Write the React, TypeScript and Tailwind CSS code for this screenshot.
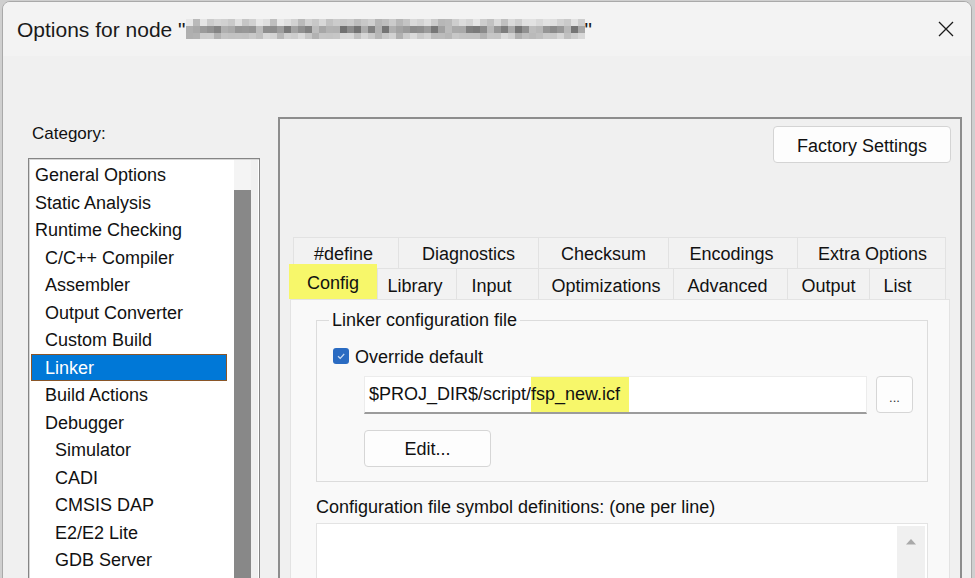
import React from "react";

const cats: { t: string; l: number; sel?: boolean }[] = [
  { t: "General Options", l: 0 },
  { t: "Static Analysis", l: 0 },
  { t: "Runtime Checking", l: 0 },
  { t: "C/C++ Compiler", l: 1 },
  { t: "Assembler", l: 1 },
  { t: "Output Converter", l: 1 },
  { t: "Custom Build", l: 1 },
  { t: "Linker", l: 1, sel: true },
  { t: "Build Actions", l: 1 },
  { t: "Debugger", l: 1 },
  { t: "Simulator", l: 2 },
  { t: "CADI", l: 2 },
  { t: "CMSIS DAP", l: 2 },
  { t: "E2/E2 Lite", l: 2 },
  { t: "GDB Server", l: 2 },
];
const levelPad = ["pl-[3px]", "pl-[13px]", "pl-[23px]"];

const topTabs = [
  { t: "#define", w: "w-[105px] pr-[5px]" },
  { t: "Diagnostics", w: "w-[140px]" },
  { t: "Checksum", w: "w-[130px]" },
  { t: "Encodings", w: "w-[129px] pr-[3px]" },
  { t: "Extra Options", w: "w-[149px] border-r pl-[2px]" },
];
const bottomTabs = [
  { t: "Library", w: "w-[79px] pr-[4px]" },
  { t: "Input", w: "w-[82px] pr-[12px]" },
  { t: "Optimizations", w: "w-[135px]" },
  { t: "Advanced", w: "w-[114px] pr-[6px]" },
  { t: "Output", w: "w-[82px]" },
  { t: "List", w: "w-[77px] border-r pr-[20px]" },
];

function BlurredName() {
  const rows = [0, 1, 2];
  const cols = Array.from({ length: 57 }, (_, i) => i);
  return (
    <div className="flex flex-col w-[399px]">
      {rows.map((r) => (
        <div key={r} className={r === 2 ? "flex h-[6px]" : "flex h-[7px]"}>
          {cols.map((c) => {
            const n = Math.abs(Math.sin(c * 12.9898 + r * 78.233) * 43758.5453) % 1;
            const base = r === 0 ? 232 - n * 50 : r === 1 ? 190 - n * 80 : 220 - n * 45;
            const g = Math.round(base);
            return (
              <div
                key={c}
                className="w-[7px] h-full"
                style={{ backgroundColor: `rgb(${g},${g},${g})` }}
              />
            );
          })}
        </div>
      ))}
    </div>
  );
}

export default function App() {
  return (
    <div className="w-[975px] h-[578px] overflow-hidden bg-[#cfcfcf] pl-[2px] pt-[1px] font-['Liberation_Sans',Arial,sans-serif] text-[#111]">
      <div className="w-[970px] h-[620px] rounded-t-[8px] border border-[#a9a9a9] bg-[#f0f0f0] flex flex-col overflow-hidden">
        {/* Title bar */}
        <div className="h-[54px] shrink-0 bg-[#f3f3f3] flex items-center pl-[14px] pr-[17px]">
          <span className="text-[21px] leading-[26px] text-[#1a1a1a] whitespace-pre pt-[1px]">Options for node "</span>
          <BlurredName />
          <span className="text-[21px] leading-[26px] text-[#1a1a1a] pt-[1px]">"</span>
          <div className="flex-1" />
          <svg width="16" height="16" viewBox="0 0 16 16">
            <path d="M1 1L15 15M15 1L1 15" stroke="#1a1a1a" strokeWidth="1.3" />
          </svg>
        </div>

        {/* Body */}
        <div className="flex pl-[25px] gap-[18px]">
          {/* Left column */}
          <div className="w-[232px] shrink-0 flex flex-col">
            <div className="mt-[67px] h-[20px] leading-[20px] text-[17px] pl-[4px] pt-[1px]">Category:</div>
            <div className="mt-[15px] h-[440px] border border-[#858585] shadow-[inset_1px_1px_0_#d6d6d6] bg-white flex pt-[1px] pl-[1px] pr-[1px]">
              <div className="w-[198px] flex flex-col pt-[1px]">
                {cats.map((c) => (
                  <div
                    key={c.t}
                    className={
                      "ml-[1px] w-[196px] h-[27.5px] flex items-center border text-[18px] pt-[2px] " +
                      levelPad[c.l] +
                      (c.sel
                        ? " bg-[#0078d7] border-[#8a5628] text-white"
                        : " border-transparent text-[#111]")
                    }
                  >
                    {c.t}
                  </div>
                ))}
              </div>
              <div className="w-[30px] flex">
                <div className="w-[6px] bg-white" />
                <div className="w-[17px] flex flex-col bg-[#f4f4f4]">
                  <div className="h-[30px]" />
                  <div className="flex-1 bg-[#888888]" />
                </div>
                <div className="w-[7px] bg-[#f0f0f0]" />
              </div>
            </div>
          </div>

          {/* Right frame */}
          <div className="mt-[61px] w-[684px] h-[500px] border-2 border-[#8d8d8d] flex flex-col">
            <div className="flex justify-end pr-[9px] pt-[7px]">
              <div className="w-[178px] h-[37px] bg-[#fdfdfd] border border-[#d4d4d4] rounded-[4px] flex items-center justify-center text-[18px] pt-[3px]">
                Factory Settings
              </div>
            </div>

            {/* Tabs */}
            <div className="mt-[74px] ml-[13px] w-[653px] flex flex-col">
              <div className="flex h-[31px]">
                {topTabs.map((t) => (
                  <div
                    key={t.t}
                    className={
                      "h-[31px] flex items-center justify-center border-l border-t border-[#e2e2e2] bg-[#f2f2f2] text-[18px] pt-[3px] " +
                      t.w
                    }
                  >
                    {t.t}
                  </div>
                ))}
              </div>
              <div className="flex h-[31px] items-start">
                <div className="relative z-10 -ml-[4px] -mt-[4px] w-[88px] h-[35px] bg-[#f7f76a] flex items-center justify-center text-[18px] pt-[3px]">
                  Config
                </div>
                {bottomTabs.map((t) => (
                  <div
                    key={t.t}
                    className={
                      "h-[31px] flex items-center justify-center border-l border-t border-[#e2e2e2] bg-[#f2f2f2] text-[18px] pt-[4px] " +
                      t.w
                    }
                  >
                    {t.t}
                  </div>
                ))}
              </div>
            </div>

            {/* Panel */}
            <div className="ml-[10px] w-[660px] h-[400px] bg-[#f9f9f9] border border-[#e3e3e3] pl-[25px] flex flex-col">
              <fieldset className="mt-[9px] w-[612px] h-[173px] border border-[#dcdcdc]">
                <legend className="ml-[12px] px-[3px] text-[18px] leading-[21px] pt-[1px]">Linker configuration file</legend>
                <div className="mt-[15px] pl-[16px] h-[20px] flex items-center gap-[6px]">
                  <div className="w-[16px] h-[16px] rounded-[3px] bg-[#2a6bc2] flex items-center justify-center">
                    <svg width="10" height="10" viewBox="0 0 10 10">
                      <path d="M2 5.2L4.2 7.3L8.2 3" fill="none" stroke="#c9dcf3" strokeWidth="1.2" />
                    </svg>
                  </div>
                  <span className="text-[18px] pt-[2px]">Override default</span>
                </div>
                <div className="mt-[10px] ml-[47px] flex items-start">
                  <div className="w-[503px] h-[38px] bg-white border border-[#ececec] border-b-[#9c9c9c] border-b-[2px] flex items-stretch pl-[4px] text-[18px]">
                    <span className="flex items-center">$PROJ_DIR$/script/</span>
                    <span className="flex items-center bg-[#f7f76a] pr-[9px]">fsp_new.icf</span>
                  </div>
                  <div className="ml-[9px] w-[37px] h-[37px] bg-[#fdfdfd] border border-[#d6d6d6] rounded-[4px] flex items-center justify-center text-[13px] pt-[6px] text-[#333]">
                    ...
                  </div>
                </div>
                <div className="mt-[16px] ml-[47px] w-[127px] h-[37px] bg-[#fdfdfd] border border-[#d6d6d6] rounded-[4px] flex items-center justify-center text-[18px] pt-[2px]">
                  Edit...
                </div>
              </fieldset>
              <div className="mt-[14px] leading-[21px] text-[18px] pt-[1px]">
                Configuration file symbol definitions: (one per line)
              </div>
              <div className="mt-[5px] w-[612px] h-[100px] bg-white border border-[#e3e3e3] flex justify-end pt-[2px] pr-[2px]">
                <div className="w-[28px] h-full bg-[#f0f0f0] flex justify-center pt-[12px]">
                  <svg width="12" height="7" viewBox="0 0 12 7">
                    <path d="M1 6.5L6 1L11 6.5Z" fill="#a9a9a9" />
                  </svg>
                </div>
              </div>
            </div>
          </div>
        </div>
      </div>
    </div>
  );
}
